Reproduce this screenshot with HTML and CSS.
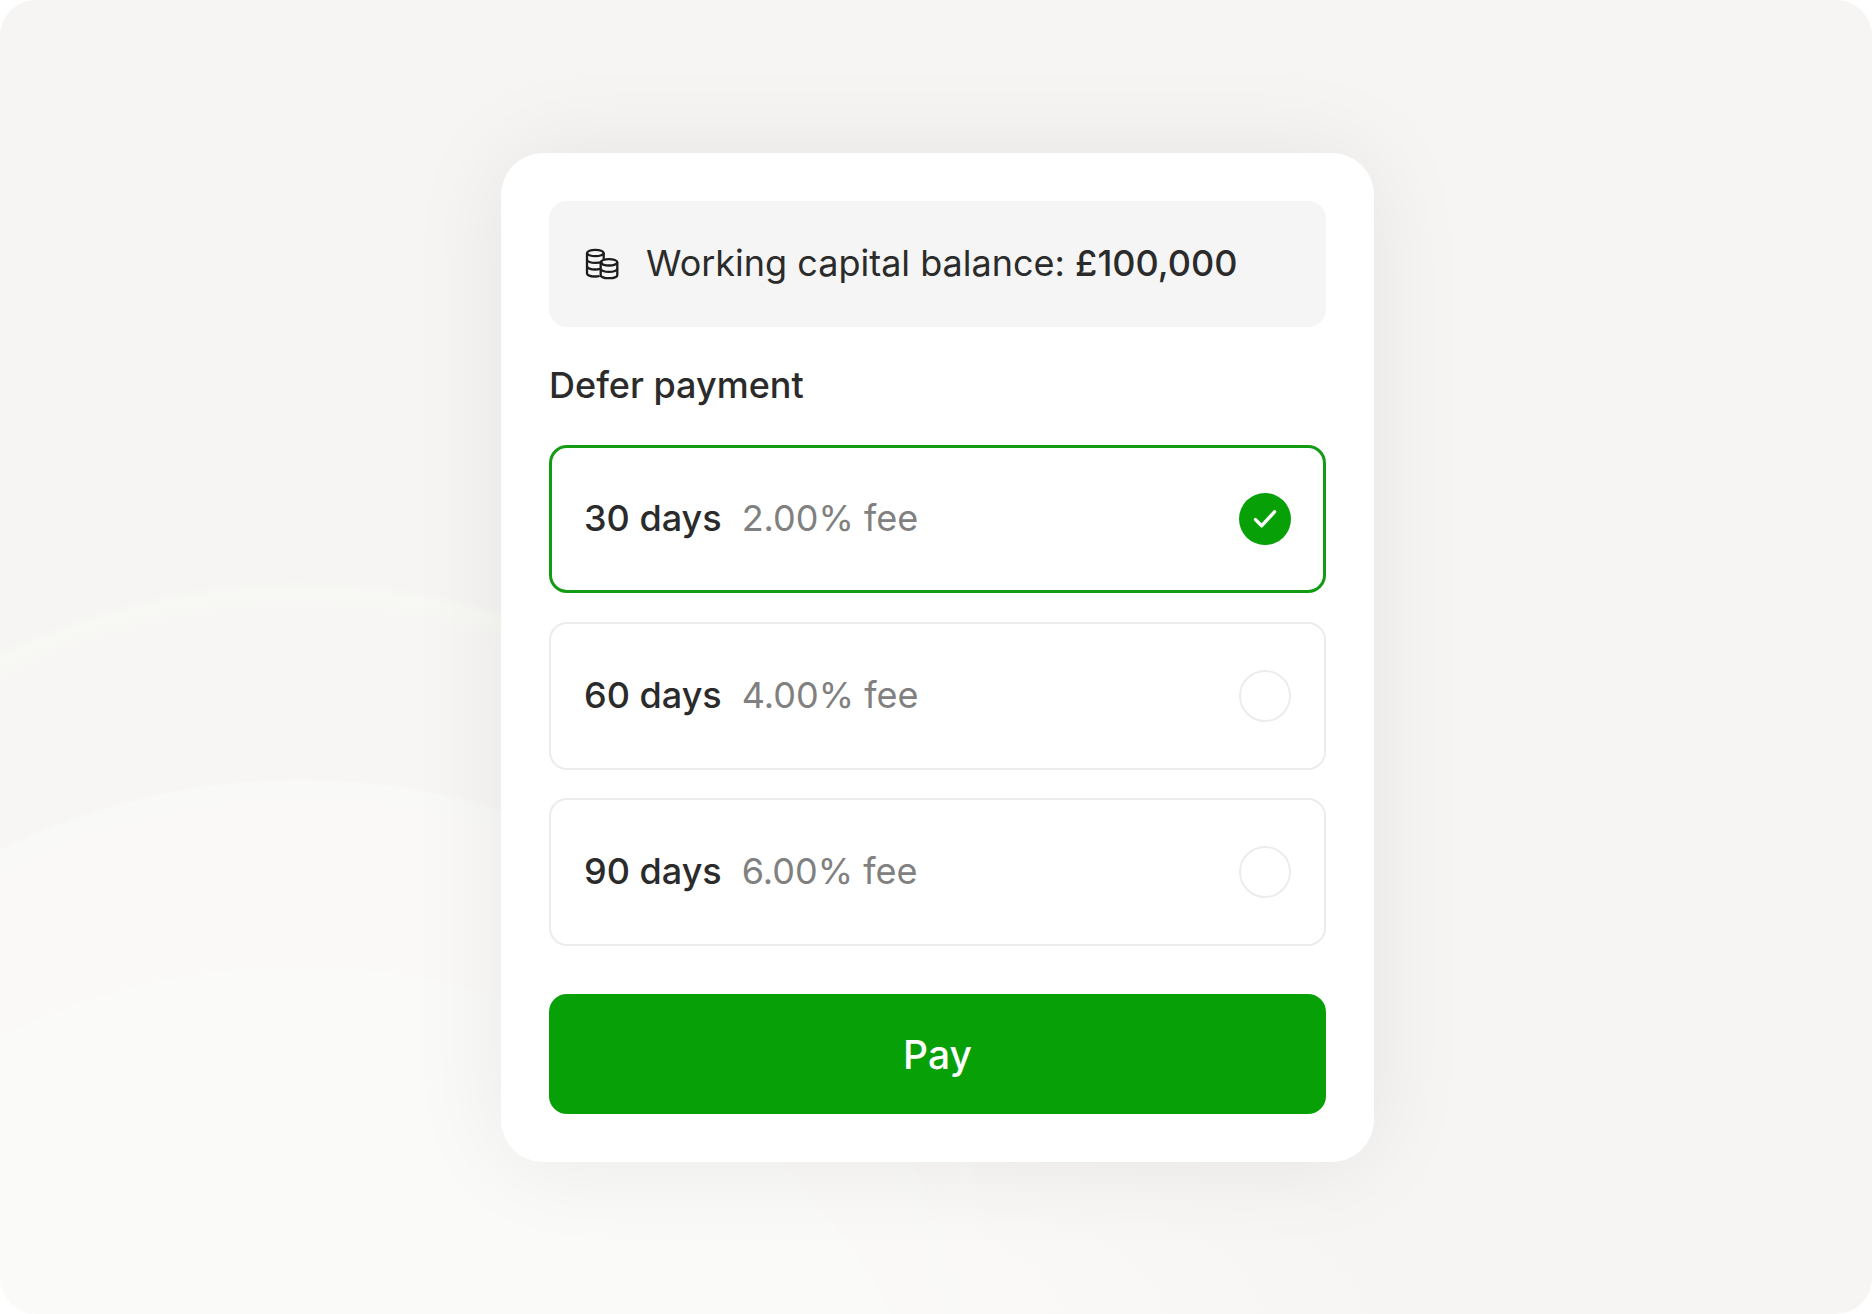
FILE: index.html
```html
<!DOCTYPE html>
<html lang="en">
<head>
    <meta charset="UTF-8">
    <meta name="viewport" content="width=device-width, initial-scale=1.0">
    <title>Defer payment</title>
    <link rel="stylesheet" href="styles.css">
</head>
<body>
    <main class="stage">
        <form class="card">
            <!-- Balance -->
            <div class="balance">
                <svg class="coins" viewBox="0 0 34 32" fill="none" stroke="currentColor" stroke-width="2.300">
                    <path d="M2 5v20.200c0 1.900 3.600 3.300 8.300 3.300 1.600 0 3.100-.200 4.400-.500"/>
                    <path d="M18.700 5v6"/>
                    <ellipse cx="10.350" cy="5" rx="8.350" ry="3.200"/>
                    <path d="M2 11.700c0 1.800 3.700 3.200 8.300 3.200 3 0 5.700-.600 7.200-1.500M2 18.300c0 1.800 3.700 3.200 8.300 3.200 1.800 0 3.400-.200 4.800-.600"/>
                    <ellipse cx="24" cy="14.300" rx="8.300" ry="3.200"/>
                    <path d="M15.700 14.300v12.600c0 1.900 3.700 3.300 8.300 3.300s8.300-1.400 8.300-3.300V14.300"/>
                    <path d="M15.700 20.700c0 1.800 3.700 3.200 8.300 3.200s8.300-1.400 8.300-3.200"/>
                </svg>
                <p class="balance-text">Working capital balance: <strong>£100,000</strong></p>
            </div>

            <h2 class="title">Defer payment</h2>

            <!-- Payment terms -->
            <div class="options">
                <div class="option selected">
                    <span class="days">30 days</span>
                    <span class="fee">2.00% fee</span>
                    <span class="radio">
                        <svg class="check" viewBox="0 0 24 20" fill="none" stroke="currentColor" stroke-width="3.400" stroke-linecap="round" stroke-linejoin="round">
                            <path d="M2.500 10.600l6.100 6.200L21.500 2.800"/>
                        </svg>
                    </span>
                </div>
                <div class="option">
                    <span class="days">60 days</span>
                    <span class="fee">4.00% fee</span>
                    <span class="radio"></span>
                </div>
                <div class="option">
                    <span class="days">90 days</span>
                    <span class="fee">6.00% fee</span>
                    <span class="radio"></span>
                </div>
            </div>

            <button type="button" class="pay">Pay</button>
        </form>
    </main>
</body>
</html>
```

FILE: styles.css
```css
* {
    box-sizing: border-box;
}

body {
    margin: 0;
    background-color: #fff;
    color: #2b2b2b;
    font-family: Inter, "Liberation Sans", sans-serif;
    font-variation-settings: "opsz" 32;
}

.stage {
    display: flex;
    justify-content: center;
    align-items: flex-start;
    height: 1314px;
    padding: 153px 0 0 3px;
    border-radius: 36px;
    overflow: hidden;
    background-color: #f6f5f3;
    /* Soft arcs rising from the bottom left */
    background-image:
        radial-gradient(circle at 300px 1647px, #fafaf8 679px, transparent 681px),
        radial-gradient(circle at 300px 1460px, #faf9f7 640px, #f9f9f7 678px, transparent 682px),
        radial-gradient(ellipse 1140px 260px at 300px 1314px, #faf9f7 60%, rgba(250, 249, 247, 0) 100%),
        radial-gradient(circle at 300px 1263px, #f7f6f4 650px, #f8f8f5 672px, rgba(248, 248, 245, 0) 684px);
}

.card {
    width: 873px;
    height: 1009px;
    padding: 48px;
    border-radius: 42px;
    background-color: #fff;
    box-shadow: 0 0 100px rgba(0, 0, 0, 0.07);
}

/* Balance */
.balance {
    display: flex;
    align-items: center;
    height: 126px;
    padding: 0 36px;
    border-radius: 18px;
    background-color: #f5f5f5;
}

.coins {
    width: 34px;
    height: 32px;
    margin-right: 27px;
    color: #1c1c1c;
}

.balance-text {
    margin: 0;
    padding-bottom: 2px;
    font-size: 36px;
    line-height: 44px;
    white-space: nowrap;
}

.balance-text strong {
    font-weight: 500;
}

.title {
    margin: 35px 0 37px;
    font-size: 36px;
    font-weight: 500;
    line-height: 46px;
}

/* Payment terms */
.options {
    display: flex;
    flex-direction: column;
    gap: 28.600px;
}

.option {
    display: flex;
    align-items: center;
    height: 148px;
    padding: 0 33px;
    border: 2px solid #ececec;
    border-radius: 18px;
    font-size: 36px;
}

.option.selected {
    padding: 0 32px;
    border: 3px solid #149b14;
}

.days {
    margin-right: 20px;
    padding-bottom: 2px;
    font-weight: 500;
}

.fee {
    padding-bottom: 2px;
    color: #808080;
}

.radio {
    display: flex;
    justify-content: center;
    align-items: center;
    width: 52px;
    height: 52px;
    margin-left: auto;
    border: 2px solid #ececec;
    border-radius: 50%;
}

.selected .radio {
    border: none;
    background-color: #07a107;
    color: #fff;
}

.check {
    width: 24px;
    height: 20px;
}

.pay {
    display: block;
    width: 100%;
    height: 120px;
    margin-top: 48px;
    border: none;
    border-radius: 18px;
    background-color: #07a107;
    color: #fff;
    font-family: inherit;
    font-size: 39px;
    font-weight: 500;
    cursor: pointer;
}
```
